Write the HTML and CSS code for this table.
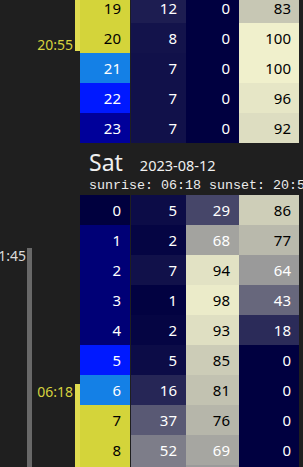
FILE: index.html
```html
<!DOCTYPE html>
<html>
<head>
<meta charset="utf-8">
<link rel="stylesheet" href="styles.css">
</head>
<body>
<div class="scroll">
  <section class="day first">
    <div class="gutter">
      <div class="bar sun" style="top:0;height:57.5px"></div>
      <span class="tlabel sunl" style="top:44px">20:55</span>
    </div>
    <div class="daybody">
      <div class="grid">
        <div class="c hour day-c">19</div><div class="c" style="background:#1d1d51">12</div><div class="c" style="background:#000040">0</div><div class="c v4 lt" style="background:#c7c7b4">83</div>
        <div class="c hour day-c">20</div><div class="c" style="background:#13134b">8</div><div class="c" style="background:#000040">0</div><div class="c v4 lt" style="background:#f0f0cc">100</div>
        <div class="c hour twi">21</div><div class="c" style="background:#11114a">7</div><div class="c" style="background:#000040">0</div><div class="c v4 lt" style="background:#f0f0cc">100</div>
        <div class="c hour blue">22</div><div class="c" style="background:#11114a">7</div><div class="c" style="background:#000040">0</div><div class="c v4 lt" style="background:#e6e6c6">96</div>
        <div class="c hour navy">23</div><div class="c" style="background:#11114a">7</div><div class="c" style="background:#000040">0</div><div class="c v4 lt" style="background:#ddddc1">92</div>
      </div>
    </div>
  </section>

  <section class="day">
    <div class="gutter">
      <div class="bar moon" style="top:104.5px;height:667.5px"></div>
      <span class="tlabel moonl" style="top:104.5px">1:45</span>
      <div class="bar sun" style="top:241px;height:531px"></div>
      <span class="tlabel sunl" style="top:240.5px">06:18</span>
    </div>
    <div class="daybody">
      <header class="head">
        <div class="title"><span class="dname">Sat</span><span class="date">2023-08-12</span></div>
        <div class="suntimes">sunrise: 06:18 sunset: 20:55</div>
      </header>
      <div class="grid">
        <div class="c hour dark">0</div><div class="c" style="background:#0c0c47">5</div><div class="c" style="background:#464669">29</div><div class="c v4 lt" style="background:#ceceb8">86</div>
        <div class="c hour night">1</div><div class="c" style="background:#050543">2</div><div class="c" style="background:#a3a39f">68</div><div class="c v4 lt" style="background:#b9b9ac">77</div>
        <div class="c hour night">2</div><div class="c" style="background:#11114a">7</div><div class="c lt" style="background:#e2e2c4">94</div><div class="c v4" style="background:#9a9a9a">64</div>
        <div class="c hour night">3</div><div class="c" style="background:#020241">1</div><div class="c lt" style="background:#ebebc9">98</div><div class="c v4" style="background:#67677c">43</div>
        <div class="c hour night">4</div><div class="c" style="background:#050543">2</div><div class="c lt" style="background:#dfdfc2">93</div><div class="c v4" style="background:#2b2b59">18</div>
        <div class="c hour blue">5</div><div class="c" style="background:#0c0c47">5</div><div class="c lt" style="background:#ccccb7">85</div><div class="c v4" style="background:#000040">0</div>
        <div class="c hour twi">6</div><div class="c" style="background:#262656">16</div><div class="c lt" style="background:#c2c2b1">81</div><div class="c v4" style="background:#000040">0</div>
        <div class="c hour day-c">7</div><div class="c" style="background:#595974">37</div><div class="c lt" style="background:#b6b6aa">76</div><div class="c v4" style="background:#000040">0</div>
        <div class="c hour day-c">8</div><div class="c" style="background:#7d7d89">52</div><div class="c" style="background:#a6a6a1">69</div><div class="c v4" style="background:#000040">0</div>
        <div class="c hour day-c">9</div><div class="c" style="background:#7d7d89">52</div><div class="c" style="background:#9a9a9a">64</div><div class="c v4" style="background:#000040">0</div>
      </div>
    </div>
  </section>
</div>
</body>
</html>
```

FILE: styles.css
```css
html, body {
  margin: 0;
  padding: 0;
  background: #1f1f1f;
  overflow: hidden;
}

body {
  font-family: "Noto Sans", "Open Sans", sans-serif;
  color: #e8e8e8;
}

.scroll {
  margin-top: -7px;
}

.day {
  display: flex;
  align-items: stretch;
}

.gutter {
  position: relative;
  width: 80px;
  flex: none;
}

.bar {
  position: absolute;
  width: 5px;
}

.bar.sun {
  left: 75px;
  background: #e0dc50;
}

.bar.moon {
  left: 27px;
  background: #686868;
}

.tlabel {
  position: absolute;
  font-size: 14px;
  line-height: 16px;
  white-space: nowrap;
}

.tlabel.sunl {
  right: 7px;
  color: #d6d23e;
}

.tlabel.moonl {
  right: 54px;
  color: #dcdcdc;
}

.daybody {
  flex: none;
}

.grid {
  display: grid;
  grid-template-columns: 51px 55px 53px 60px;
  grid-auto-rows: 30px;
}

.c {
  font-size: 15px;
  line-height: 30px;
  text-align: right;
  padding-right: 9px;
  color: #ffffff;
}

.c.v4 {
  padding-right: 8px;
}

.c.lt {
  color: #000000;
}

.hour {
  border-right: 1px solid #1f1f1f;
}

.hour.day-c { background: #d4d43a; color: #000; }
.hour.twi { background: #1480e6; }
.hour.blue { background: #0019ff; }
.hour.navy { background: #00009a; }
.hour.night { background: #000076; }
.hour.dark { background: #00003e; }

.head {
  height: 52px;
  box-sizing: border-box;
  padding: 5px 0 0 9px;
  white-space: nowrap;
}

.title {
  display: flex;
  align-items: baseline;
  line-height: 28px;
}

.dname {
  font-size: 23px;
  color: #f0f0f0;
}

.date {
  font-size: 14.5px;
  margin-left: 17px;
  color: #f0f0f0;
}

.suntimes {
  font-family: "Liberation Mono", "DejaVu Sans Mono", monospace;
  font-size: 13.33px;
  line-height: 13px;
  color: #ececec;
}
```
